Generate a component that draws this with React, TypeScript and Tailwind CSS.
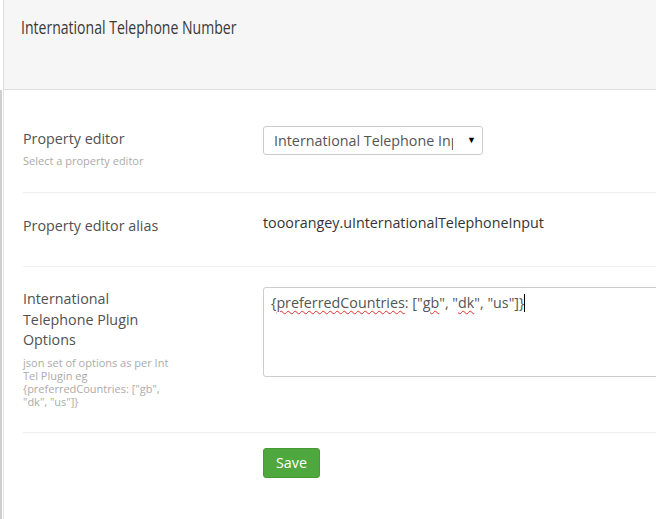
import React from "react";

const App: React.FC = () => {
  return (
    <div className="w-[656px] h-[519px] overflow-hidden bg-white font-['Open_Sans',sans-serif] text-[#515151]">
      {/* Header */}
      <div className="h-[90px] bg-[#f6f6f6] border-b border-[#dcdcdc] border-l border-l-[#dcdcdc] ml-[3px] pl-[17px] pt-[15px]">
        <h1 className="text-[18px] leading-[24px] text-[#3a3a3a] origin-left scale-x-[0.78] whitespace-nowrap">
          International Telephone Number
        </h1>
      </div>

      {/* Body */}
      <div className="h-[429px] border-l-2 border-l-[#cfcfcf] pl-[1px]">
        <div className="h-full border-l border-l-[#e4e4e4] pl-[19px]">
          {/* Row 1 */}
          <div className="flex border-b border-[#f0f0f0] pt-[36px] pb-[25px]">
            <div className="w-[240px] shrink-0">
              <div className="mt-[3px] text-[14.3px] leading-[20px]">Property editor</div>
              <div className="mt-[5px] text-[11px] leading-[13px] text-[#ababab]">Select a property editor</div>
            </div>
            <div className="relative w-[220px] h-[29px] border border-[#cccccc] rounded-[3px] bg-white flex items-center">
              <div className="w-[189px] overflow-hidden whitespace-nowrap pl-[10px] text-[14.3px] text-[#555555]">
                International Telephone Input
              </div>
              <span className="absolute right-[6px] top-[6px] text-[9px] leading-[14px] text-black">▼</span>
            </div>
          </div>

          {/* Row 2 */}
          <div className="flex border-b border-[#f0f0f0] pt-[20px] pb-[30px]">
            <div className="w-[240px] shrink-0">
              <div className="mt-[3px] text-[14.3px] leading-[20px]">Property editor alias</div>
            </div>
            <div className="text-[14.3px] leading-[20px] text-[#343434]">tooorangey.uInternationalTelephoneInput</div>
          </div>

          {/* Row 3 */}
          <div className="flex border-b border-[#f0f0f0] pt-[20px] pb-[24px]">
            <div className="w-[240px] shrink-0">
              <div className="w-[150px] mt-[2px] text-[14.3px] leading-[20.5px]">International Telephone Plugin Options</div>
              <div className="w-[152px] mt-[5px] text-[11px] leading-[13px] text-[#ababab]">
                json set of options as per Int Tel Plugin eg {"{"}preferredCountries: ["gb", "dk", "us"]{"}"}
              </div>
            </div>
            <div className="shrink-0 w-[460px] h-[90px] border border-[#cccccc] rounded-[3px] px-[7px] pt-[5px] text-[14.3px] leading-[20px] text-[#555555] whitespace-nowrap">
              {"{"}
              <span className="underline decoration-wavy decoration-[#e03030] decoration-1 underline-offset-2">preferredCountries</span>
              : ["
              <span className="underline decoration-wavy decoration-[#e03030] decoration-1 underline-offset-2">gb</span>
              ", "
              <span className="underline decoration-wavy decoration-[#e03030] decoration-1 underline-offset-2">dk</span>
              ", "us"]{"}"}
              <span className="inline-block w-px h-[18px] bg-black align-middle -mt-[2px]" />
            </div>
          </div>

          {/* Save */}
          <div className="pt-[15px] pl-[240px]">
            <button className="h-[30px] w-[57px] rounded-[3px] bg-[#4fa83d] text-white text-[14.3px] border border-[#479a36]">
              Save
            </button>
          </div>
        </div>
      </div>
    </div>
  );
};

export default App;
